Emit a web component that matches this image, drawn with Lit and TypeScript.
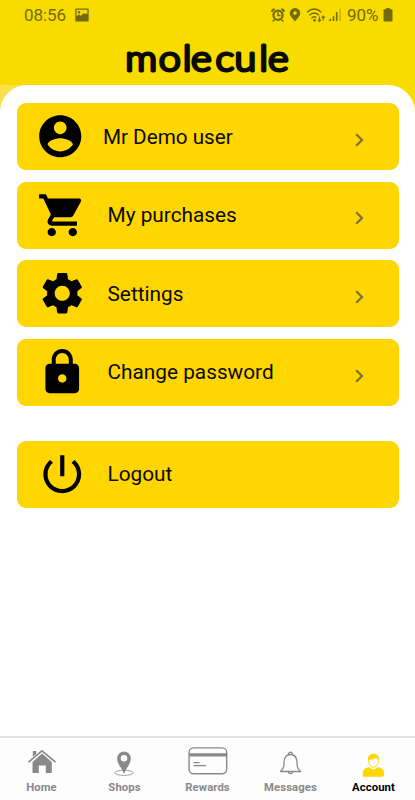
import { LitElement, html, svg, css } from "lit";
import { customElement, property } from "lit/decorators.js";
import { classMap } from "lit/directives/class-map.js";

const ROW_ICONS: Record<string, unknown> = {
  user: svg`<path fill-rule="evenodd" d="M12 2C6.48 2 2 6.48 2 12s4.48 10 10 10 10-4.48 10-10S17.52 2 12 2zm0 3c1.66 0 3 1.34 3 3s-1.34 3-3 3-3-1.34-3-3 1.34-3 3-3zm0 14.2c-2.5 0-4.71-1.28-6-3.22.03-1.99 4-3.08 6-3.08 1.99 0 5.97 1.09 6 3.08-1.29 1.94-3.5 3.22-6 3.22z"/>`,
  cart: svg`<path d="M7 18c-1.1 0-1.99.9-1.99 2S5.900 22 7 22s2-.9 2-2-.9-2-2-2zM1 2v2h2l3.600 7.590-1.350 2.450c-.16.28-.25.61-.25.96 0 1.100.9 2 2 2h12v-2H7.420c-.14 0-.25-.11-.25-.25l.03-.12.9-1.630h7.450c.75 0 1.410-.41 1.750-1.030l3.580-6.490A1.003 1.003 0 0 0 20 4H5.210l-.94-2H1zm16 16c-1.100 0-1.990.9-1.990 2s.89 2 1.990 2 2-.9 2-2-.9-2-2-2z"/>`,
  gear: svg`<path d="M19.140 12.940c.04-.3.06-.61.06-.94 0-.32-.02-.64-.07-.94l2.030-1.580c.18-.14.23-.41.12-.61l-1.920-3.320c-.12-.22-.37-.29-.59-.22l-2.390.96c-.5-.38-1.030-.7-1.620-.94l-.36-2.540c-.04-.24-.24-.41-.48-.41h-3.840c-.24 0-.43.17-.47.41l-.36 2.540c-.59.24-1.130.57-1.620.94l-2.390-.96c-.22-.08-.47 0-.59.22L2.740 8.870c-.12.21-.08.47.12.61l2.030 1.580c-.05.3-.09.63-.09.94s.02.64.07.94l-2.030 1.580c-.18.14-.23.41-.12.61l1.920 3.320c.12.22.37.29.59.22l2.390-.96c.5.38 1.030.7 1.620.94l.36 2.540c.05.24.24.41.48.41h3.840c.24 0 .44-.17.47-.41l.36-2.540c.59-.24 1.130-.56 1.620-.94l2.390.96c.22.08.47 0 .59-.22l1.920-3.320c.12-.22.07-.47-.12-.61l-2.010-1.580zM12 15.600c-1.980 0-3.600-1.620-3.600-3.600s1.620-3.600 3.600-3.600 3.600 1.620 3.600 3.600-1.620 3.600-3.600 3.600z"/>`,
  lock: svg`<path d="M18 8h-1V6c0-2.760-2.240-5-5-5S7 3.240 7 6v2H6c-1.100 0-2 .9-2 2v10c0 1.100.9 2 2 2h12c1.100 0 2-.9 2-2V10c0-1.100-.9-2-2-2zm-6 9c-1.100 0-2-.9-2-2s.9-2 2-2 2 .9 2 2-.9 2-2 2zm3.100-9H8.900V6c0-1.710 1.390-3.100 3.100-3.100s3.100 1.390 3.100 3.100v2z"/>`,
  power: svg`<path d="M13 3h-2v10h2V3zm4.830 2.170l-1.420 1.420C17.990 7.860 19 9.810 19 12c0 3.870-3.130 7-7 7s-7-3.130-7-7c0-2.190 1.010-4.140 2.580-5.420L6.170 5.170C4.230 6.820 3 9.260 3 12c0 4.970 4.030 9 9 9s9-4.030 9-9c0-2.740-1.230-5.180-3.170-6.830z"/>`,
};

const TAB_ICONS: Record<string, unknown> = {
  home: svg`
    <path d="M6.500 16.200 20 4.800 33.500 16.200" fill="none" stroke="currentColor" stroke-width="1.700"/>
    <path d="M10.800 10.800V5h3.400v3z M20 7.600 29.800 16v10.200q0 .8-.8.8h-5.200v-7.500h-7V27h-5.500q-.8 0-.8-.8V16z"/>`,
  pin: svg`
    <ellipse cx="19" cy="26.800" rx="9.200" ry="2.600" fill="none" stroke="currentColor" stroke-width=".8"/>
    <path fill-rule="evenodd" d="M19 28C17.200 22 12.200 18.600 12.200 12.400a6.800 6.800 0 0 1 13.600 0C25.800 18.600 20.800 22 19 28zM19 9a3.300 3.300 0 1 0 0 6.600A3.300 3.300 0 0 0 19 9z"/>`,
  card: svg`
    <rect x="1.100" y="1.900" width="37.600" height="25.800" rx="4.500" fill="none" stroke="currentColor" stroke-width="1.400"/>
    <path d="M1.500 7.200h37v3.200h-37zM5.500 16h6v1.200h-6zM5.500 19h12.500v1.200H5.500z"/>`,
  bell: svg`
    <path d="M9.400 25.500c2.600-2 3.600-4.200 3.600-8.500 0-5.400 2.400-8.500 6.500-8.500s6.500 3.100 6.500 8.500c0 4.300 1 6.500 3.600 8.500zM17.700 8.500a1.850 1.850 0 1 1 3.600 0M17.200 25.800a2.350 2.350 0 0 0 4.600 0" fill="none" stroke="currentColor" stroke-width="1.300" stroke-linejoin="round"/>`,
  person: svg`
    <path d="M8.800 30.700v-3.600c0-4.200 3.400-5.300 6.500-6.100 1.400 1.700 2.900 2.400 4.200 2.400s2.800-.7 4.200-2.400c3.100.8 6.500 1.900 6.500 6.100 0 2.200-.5 3.600-2 3.600z"/>
    <path transform="translate(0 .7)" fill-rule="evenodd" d="M19.500 7c-3.900 0-5.800 2.700-5.500 6.100.3 4.500 2.500 8 5.500 8s5.200-3.500 5.500-8C25.300 9.700 23.400 7 19.500 7zM14.900 13c2.500 0 6.200-.6 7.500-2.200.5 1.200 1 1.800 1.800 2.200-.2 4-2 7.200-4.700 7.200S15.100 17 14.900 13z"/>`,
};

@customElement("status-bar")
class StatusBar extends LitElement {
  static styles = css`
    :host { display: flex; height: 30px; padding: 0 22.500px 0 24px; align-items: center; justify-content: space-between; color: #746a0c; font: 17px Roboto, sans-serif; box-sizing: border-box; }
    .side { display: flex; align-items: center; }
    .time { letter-spacing: -0.1px; }
    .photo { margin-left: 9px; }
    .marks { margin-right: 6px; }
    .battery { margin-left: 4px; }
    svg { display: block; fill: currentColor; }
  `;
  render() {
    return html`
      <div class="side">
        <span class="time">08:56</span>
        <svg class="photo" width="14" height="14" viewBox="0 0 14 14">
          <path fill-rule="evenodd" d="M1 .5h12q.7 0 .7.700v11.600q0 .7-.7.700H1q-.7 0-.7-.7V1.200Q.3.500 1 .500zM1.600 1.800v6.500l2.400-2 1.600 1.500L9 5l1.300 1.200 1.100-1 1 1V1.800zM4 3a1.300 1.300 0 1 1 0 2.600A1.300 1.300 0 0 1 4 3z"/>
        </svg>
      </div>
      <div class="side">
        <svg class="marks" width="71" height="16" viewBox="0 0 71 16">
          <g fill="none" stroke="currentColor">
            <circle cx="8" cy="8.200" r="4.600" stroke-width="2.200"/>
            <path d="M8 5.200v3.200h2.600M4.300 12.700l-1.500 1.700M11.700 12.700l1.500 1.700" stroke-width="1.500"/>
            <path d="M1.700 4.700Q2.300 2.400 4.700 2.200M14.300 4.700Q13.700 2.400 11.300 2.200" stroke-width="2"/>
            <path d="M37 5.200q7.200-6.500 14.400 0M39.300 8.300q4.900-4.700 9.800 0M41.500 11.300q2.700-2.500 4.700-.8" stroke-width="1.400"/>
            <path d="M49.500 9.500v5M48 12.700l1.500 1.800 1.500-1.800M53.200 13.500V9M51.700 10.800l1.500-1.800 1.500 1.800" stroke-width="1.100"/>
          </g>
          <path fill-rule="evenodd" d="M25 1a5.200 5.200 0 0 1 5.200 5.200c0 3-2.700 4.900-5.200 8.300-2.500-3.400-5.200-5.300-5.200-8.300A5.200 5.200 0 0 1 25 1zM25 4.300a1.800 1.800 0 1 0 0 3.600 1.800 1.800 0 0 0 0-3.600z"/>
          <circle cx="44.500" cy="13.300" r="1.400"/>
          <path d="M59.500 11.800h1.600v2.200h-1.600zM62.700 9.200h1.600V14h-1.600zM65.900 5h1.600v9h-1.600z"/>
          <path d="M69.500 1.500h1.200V14h-1.200z" opacity=".5"/>
        </svg>
        <span>90%</span>
        <svg class="battery" width="10" height="14" viewBox="0 0 10 14">
          <path d="M3.200 0h3.600v1.300h1.900q.8 0 .8.800V12.700q0 .8-.8.800H1.300q-.8 0-.8-.8V2.100q0-.8.8-.8h1.900z"/>
        </svg>
      </div>`;
  }
}

@customElement("menu-row")
class MenuRow extends LitElement {
  @property() icon = "";
  @property() label = "";
  @property({ type: Boolean }) chevron = false;
  static styles = css`
    :host { display: block; }
    .row { display: flex; align-items: center; height: 67px; border-radius: 9px; background: #ffd600; padding: 0 33px 0 20px; box-sizing: border-box; color: #0b0a02; }
    .icon { width: 50.500px; height: 50.500px; flex: none; fill: #000; }
    .label { flex: 1; margin-left: 20px; font: 20.800px Roboto, sans-serif; white-space: nowrap; }
    .user { margin-left: -2.500px; }
    .user + .label { margin-left: 17.900px; font-size: 20.700px; }
    .chev { width: 12px; height: 16px; margin-top: 6.500px; fill: none; stroke: #80703c; stroke-width: 2.300; }
  `;
  render() {
    return html`<div class="row">
      <svg class="icon ${this.icon}" viewBox="0 0 24 24">${ROW_ICONS[this.icon]}</svg>
      <span class="label">${this.label}</span>
      ${this.chevron ? html`<svg class="chev" viewBox="0 0 12 16"><path d="M2.200 2.200 8 8l-5.800 5.800"/></svg>` : ""}
    </div>`;
  }
}

@customElement("tab-bar")
class TabBar extends LitElement {
  static styles = css`
    :host { display: grid; grid-template-columns: repeat(5, 1fr); height: 64px; border-top: 2px solid #e2e2e2; background: #fdfdfd; box-sizing: border-box; }
    .tab { display: flex; flex-direction: column; align-items: center; padding-top: 8px; color: #898989; }
    .tab svg { width: 40px; height: 32px; fill: currentColor; }
    .text { font: 700 11.300px/14px Roboto, sans-serif; margin-top: 3px; letter-spacing: 0.100px; }
    .on { color: #ffd600; }
    .on .text { color: #000; }
  `;
  render() {
    const tabs = [["home", "Home"], ["pin", "Shops"], ["card", "Rewards"], ["bell", "Messages"], ["person", "Account"]];
    return tabs.map(([icon, text]) => html`
      <div class=${classMap({ tab: true, on: icon === "person" })}>
        <svg viewBox="0 0 40 32">${TAB_ICONS[icon]}</svg>
        <span class="text">${text}</span>
      </div>`);
  }
}

@customElement("app-root")
class AppRoot extends LitElement {
  static styles = css`
    :host { display: flex; flex-direction: column; width: 415px; height: 800px; overflow: hidden; background: #fff; }
    .head { height: 85px; background: #f8dc00; flex: none; }
    .logo { display: block; width: 415px; height: 55px; }
    .logo text { font: 300 35px Lato, sans-serif; fill: #0a0a00; stroke: #0a0a00; stroke-width: 3px; stroke-linejoin: round; stroke-linecap: round; }
    .body { flex: 1; background: linear-gradient(90deg, #fae04b 30px, #f8dc00 30px) top / 100% 40px no-repeat; }
    .panel { height: 100%; box-sizing: border-box; background: #fff; border-radius: 27px 27px 0 0; padding: 18px 16.500px 0 17px; display: flex; flex-direction: column; gap: 11.600px; }
    .last { margin-top: 23.500px; }
  `;
  render() {
    return html`
      <header class="head">
        <status-bar></status-bar>
        <svg class="logo" viewBox="0 0 415 55">
          <text transform="translate(127.500 0) scale(1.130 1)" x="-2 27.600 48.900 56.100 77.800 94.700 116.600 124.400" y="41.500">molecule</text>
        </svg>
      </header>
      <main class="body">
        <div class="panel">
          <menu-row icon="user" label="Mr Demo user" chevron></menu-row>
          <menu-row icon="cart" label="My purchases" chevron></menu-row>
          <menu-row icon="gear" label="Settings" chevron></menu-row>
          <menu-row icon="lock" label="Change password" chevron></menu-row>
          <menu-row class="last" icon="power" label="Logout"></menu-row>
        </div>
      </main>
      <tab-bar></tab-bar>`;
  }
}
